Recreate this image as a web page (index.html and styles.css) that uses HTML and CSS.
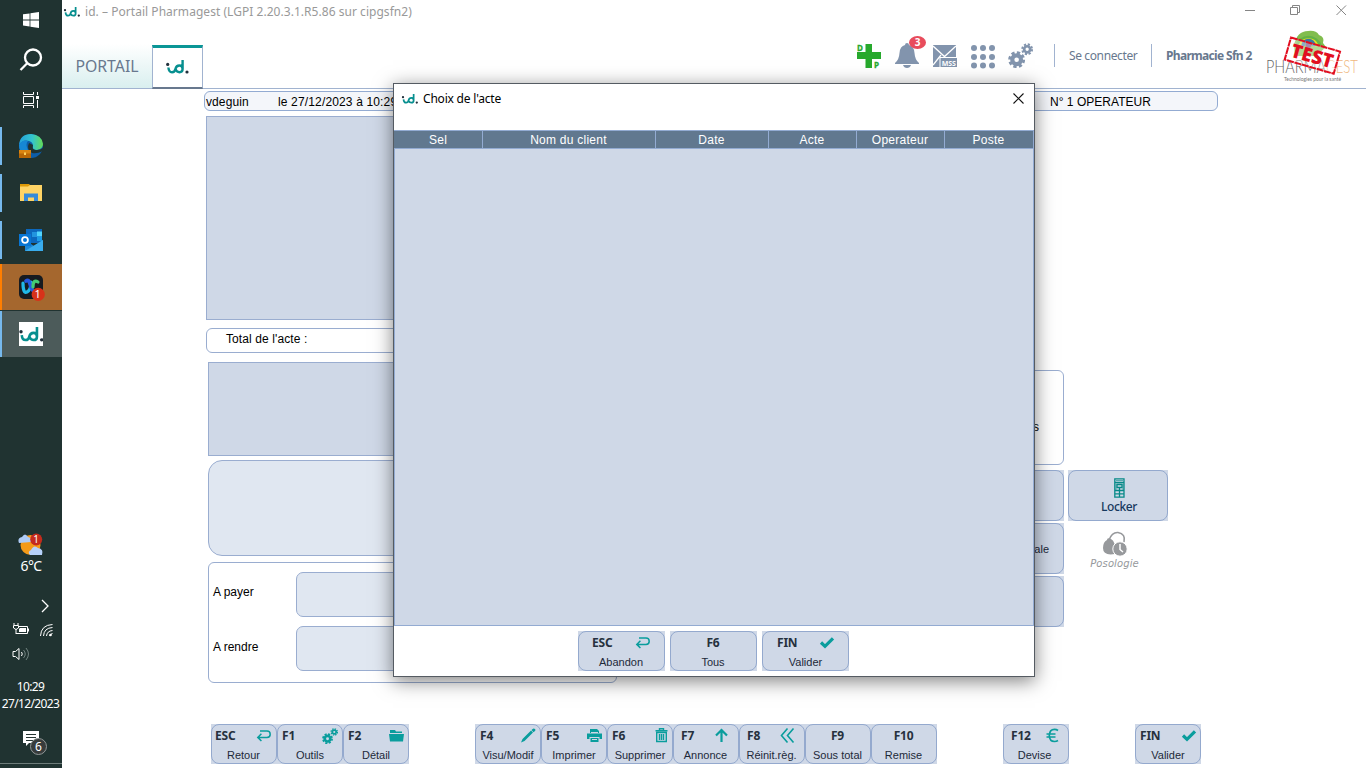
FILE: index.html
```html
<!DOCTYPE html>
<html lang="fr">
<head>
<meta charset="utf-8">
<title>id. – Portail Pharmagest</title>
<link rel="stylesheet" href="styles.css">
</head>
<body>
<svg class="defs" aria-hidden="true">
  <symbol id="logo" viewBox="0 0 23 14">
    <circle cx="1.700" cy="4.400" r="1.600" fill="#22303c"/><circle cx="21" cy="12" r="1.600" fill="#22303c"/>
    <path d="M2.400 7.500Q2.800 12.200 6 12.200Q8.800 12.200 9.400 9Q10.300 5.500 13.300 5.500Q16.600 5.500 16.600 9Q16.600 12.200 13.500 12.200Q10.800 12.200 9.600 9.400M16.600 0V9" fill="none" stroke="#078f8f" stroke-width="2.400"/>
  </symbol>
  <symbol id="back" viewBox="0 0 16 14"><path d="M4 2H11Q14.200 2 14.200 5.200T11 8.400H2M5.400 4.800L1.800 8.400L5.400 12" fill="none" stroke="#0a9d9d" stroke-width="1.500"/></symbol>
  <symbol id="check" viewBox="0 0 16 14"><path d="M2 6.500L6 10.300L14 2.300" fill="none" stroke="#0a9d9d" stroke-width="3.200"/></symbol>
  <symbol id="gears" viewBox="0 0 24 24">
    <g fill="none" stroke="currentColor"><circle cx="8.3" cy="16" r="4.200" stroke-width="4"/><circle cx="8.3" cy="16" r="6.800" stroke-width="2.600" stroke-dasharray="3.140 2.200"/><circle cx="18.400" cy="6" r="2.900" stroke-width="2.600"/><circle cx="18.400" cy="6" r="4.700" stroke-width="2" stroke-dasharray="2.100 1.590"/></g>
  </symbol>
</svg>
<aside class="taskbar">
  <div class="task win"><svg width="16" height="16" viewBox="0 0 16 16"><path d="M0 2.3L6.6 1.4V7.5H0ZM7.4 1.3L16 0V7.5H7.4ZM0 8.4H6.6V14.5L0 13.6ZM7.4 8.4H16V16L7.4 14.7Z" fill="#fff"/></svg></div>
  <div class="task search"><svg width="24" height="24" viewBox="0 0 24 24" fill="none" stroke="#fff" stroke-width="2.300"><circle cx="14" cy="9.5" r="8"/><path d="M8.2 15.3L1.5 22"/></svg></div>
  <div class="task view"><svg width="16" height="16" viewBox="0 0 16 16" fill="none" stroke="#fff"><path d="M.5 0V2.5H10.5V0M.5 16V13.5H10.5V16M.5 4.5H10.5V11.5H.5ZM14.5 0V3M14.5 8V16"/><path d="M13 4H16V7H13Z" fill="#fff" stroke="none"/></svg></div>
  <div class="task app edge"><svg width="24" height="24" viewBox="0 0 24 24"><defs><linearGradient id="eg"><stop stop-color="#249fd8"/><stop offset=".55" stop-color="#34c5cf"/><stop offset="1" stop-color="#65dc53"/></linearGradient></defs><circle cx="12" cy="12" r="12" fill="#0d5da8"/><path d="M0 11Q1 0 12 0Q23 1 24 10Q24 15 18 16Q13 16 14 12Q14 8 10 7Q4 5 0 11Z" fill="url(#eg)"/><path d="M0 11Q3 5 9 7Q6 10 9 16H1Q0 14 0 11Z" fill="#1687d4"/><path d="M10 9Q7 15 13 19Q18 20 24 17L24 14Q20 17 15 15.5Q13 15 14 11Z" fill="#203331"/><path d="M0 16H12V24H0Z" fill="#b96705"/><path d="M0 16H12V19.5H0Z" fill="#db8410"/><path d="M5 18.5H7V21H5Z" fill="#ffd05a"/></svg></div>
  <div class="task app files"><svg width="24" height="20" viewBox="0 0 24 20"><path d="M1 1H10L12 3V10H1Z" fill="#dd9907"/><path d="M1 3.5H9L11 2H23V18H1Z" fill="#fed465"/><path d="M5 18V10.5H19V18H15V14.5H9V18Z" fill="#368bd8"/></svg></div>
  <div class="task app mail"><svg width="24" height="24" viewBox="0 0 24 24"><path d="M7 1H23V15H7Z" fill="#0c68bd"/><path d="M13 4H18V9H13Z" fill="#2295df"/><path d="M18 3.5H23V8.5H18Z" fill="#51d5fc"/><path d="M18 8.5H23V13H18Z" fill="#1d9be6"/><path d="M6 12L15 18L24 12V23H6Z" fill="#1b86d5"/><path d="M6 23L24 12V23Z" fill="#39adee"/><path d="M0 6H12V18H0Z" fill="#0876d4"/><circle cx="6" cy="12" r="2.9" fill="none" stroke="#fff" stroke-width="1.8"/></svg></div>
  <div class="task app webex"><svg width="27" height="27" viewBox="0 0 27 27"><rect x="1" y="1" width="24" height="24" rx="5" fill="#171b20"/><path d="M5 9Q5 20 9 18T13 8" fill="none" stroke="#20b8e6" stroke-width="3.2" stroke-linecap="round"/><path d="M8 7Q11 5 12 10T16 18" fill="none" stroke="#2458df" stroke-width="3.800" stroke-linecap="round"/><path d="M15 13Q15 5 20 8" fill="none" stroke="#45cb72" stroke-width="3.2" stroke-linecap="round"/><circle cx="20.2" cy="20.4" r="6.6" fill="#d83219"/><text class="badge" x="19.7" y="24">1</text></svg></div>
  <div class="task app ident"><span class="white"><svg width="25" height="15"><use href="#logo"/></svg></span></div>
  <div class="weather"><svg width="26" height="24" viewBox="0 0 26 24"><circle cx="12.5" cy="12" r="10" fill="#f59a18"/><path d="M1 10Q-1 5 4 4Q7-1 10 4Q14 5 13 9Z" fill="#aecbf6"/><path d="M12 22Q9 19 13 17Q16 11 20 15Q26 16 24 22Z" fill="#b7d2fa"/><circle cx="18.2" cy="6.5" r="6" fill="#c42b1c"/><text class="badge sm" x="18" y="10">1</text></svg><span>6°C</span></div>
  <div class="tray">
    <svg width="50" height="68" viewBox="0 0 50 68" fill="none" stroke="#fff"><path d="M35 1L41 7L35 13" stroke-width="1.3"/><path d="M11 27.500H20.500V34.500H9M21.500 29.500V32.500M7 24V26M11 24V26M6.5 26.5H11.5V29Q9 32 6.5 29ZM9 30V35"/><path d="M13 29H19V33H12V30Z" fill="#fff" stroke="none"/><path d="M33.5 37Q34 26 45.500 25.500M36.500 37Q37 29 45.500 28.500M39.500 37Q40 32 45.500 31.500M42.500 37Q43 35 45.500 34.500"/><circle cx="43.500" cy="36" r="1.300" fill="#fff" stroke="none"/><path d="M6 52.500H8.500L12 49.500V60.500L8.500 57.500H6Z"/><path d="M14.500 53Q16 55 14.500 57"/><path d="M16.500 51Q20 55 16.500 59M19 49Q24 55 19 61" stroke="#718380"/></svg>
  </div>
  <div class="clock"><span>10:29</span><span>27/12/2023</span></div>
  <div class="notes"><svg width="28" height="28" viewBox="0 0 28 28"><path d="M2 1H18V13H8L5 16V13H2Z" fill="#fff"/><path d="M5 4.500H15M5 7.500H15M5 10.500H12" stroke="#263633"/><circle cx="17.500" cy="16.500" r="8" fill="#383c3c" stroke="#909797"/><text class="count" x="17.500" y="21">6</text></svg></div>
  <div class="edge-line"></div>
</aside>
<main class="window">
  <div class="titlebar"><svg class="tlogo" width="18" height="10"><use href="#logo"/></svg><span class="wintitle">id. – Portail Pharmagest (LGPI 2.20.3.1.R5.86 sur cipgsfn2)</span>
    <svg class="winctl" width="106" height="14" viewBox="0 0 106 14" fill="none" stroke="#858585"><path d="M0 7.500H10M45.500 4.500H52.500V11.500H45.500ZM47.500 4.500V2.500H54.500V9.500H52.500M91.500 2.500L101 12M101 2.500L91.500 12"/></svg></div>
  <header class="header">
    <nav class="tabs"><div class="tab portal"><span>PORTAIL</span></div><div class="tab active"><svg width="23" height="14"><use href="#logo"/></svg></div></nav>
    <div class="tools">
      <svg class="t-dp" width="25" height="25" viewBox="0 0 25 25"><path d="M8.500 0H15V8H24V15H15V24H8.500V15H0V8H8.500Z" fill="#27a92d"/><text class="dp" x="0" y="7">D</text><path d="M16 16H25V25H16Z" fill="#fff"/><text class="dp" x="17" y="24">P</text></svg>
      <svg class="t-bell" width="32" height="33" viewBox="0 0 32 33" fill="#8294ad"><path d="M0 27Q4 24 4.500 17Q5 10 10 9Q10 7 12 7T14 9Q19 10 19.500 17Q20 24 24 27V28H0Z"/><path d="M8 29H16Q15 32 12 32T8 29Z"/><ellipse cx="22.500" cy="6.500" rx="8.500" ry="6.500" fill="#e84c5c"/><text class="badge bell" x="22.500" y="10.200">3</text></svg>
      <svg class="t-mss" width="25" height="23" viewBox="0 0 25 23"><path d="M0 0H23V22H0Z" fill="#8294ad"/><path d="M0 1L11.500 11.500L23 1M0 20L8 10" fill="none" stroke="#fff" stroke-width="1.300"/><rect x="7" y="12.500" width="17.500" height="10" fill="#8294ad" stroke="#fff"/><text class="mss" x="15.800" y="20.500">MSS</text></svg>
      <svg class="t-grid" width="24" height="24" viewBox="0 0 24 24" fill="#8294ad"><circle cx="3" cy="3" r="3"/><circle cx="12" cy="3" r="3"/><circle cx="21" cy="3" r="3"/><circle cx="3" cy="12" r="3"/><circle cx="12" cy="12" r="3"/><circle cx="21" cy="12" r="3"/><circle cx="3" cy="20.500" r="3"/><circle cx="12" cy="20.500" r="3"/><circle cx="21" cy="20.500" r="3"/></svg>
      <svg class="t-gear" width="25" height="25"><use href="#gears"/></svg>
      <span class="login">Se connecter</span><strong class="shop">Pharmacie Sfn 2</strong>
      <svg class="brand" width="95" height="58" viewBox="0 0 95 58"><path d="M28 15Q31 1 42 1Q50 0 53 5Q59 7 57 13L60 17L50 26H29Z" fill="#81bd4e"/><g fill="none" stroke-width="3.500"><path d="M31 16A12 12 0 0 1 54 16" stroke="#63b346"/><path d="M34 16A9 9 0 0 1 51 16" stroke="#e5df20"/><path d="M37 16A5.500 5.500 0 0 1 48 16" stroke="#3879a5"/></g><circle cx="42.500" cy="15" r="3" fill="#743777"/><text class="pharma" x="0" y="43" textLength="60" lengthAdjust="spacingAndGlyphs">PHARMA</text><text class="pharma gest" x="60" y="43" textLength="32" lengthAdjust="spacingAndGlyphs">GEST</text><text class="slogan" x="18" y="51" textLength="57" lengthAdjust="spacingAndGlyphs">Technologies pour la santé</text><g transform="rotate(16 46 25)"><rect x="21" y="14" width="51" height="23" fill="#fff" fill-opacity=".4" stroke="#e20e20" stroke-width="2" stroke-dasharray="7 .7"/><text class="test" x="25" y="32.500" textLength="43" lengthAdjust="spacingAndGlyphs">TEST</text></g></svg>
    </div>
  </header>
  <section class="workspace">
    <div class="status"><span class="s-user">vdeguin</span><span class="s-date">le 27/12/2023 à 10:29</span><span class="s-op">N° 1 OPERATEUR</span></div>
    <div class="columns">
      <div class="left">
        <div class="lines"></div>
        <div class="total"><span>Total de l'acte :</span></div>
        <div class="detail"></div><div class="message"></div>
        <div class="payment"><div class="prow"><span>A payer</span><div class="field"></div></div><div class="prow second"><span>A rendre</span><div class="field"></div></div></div>
      </div>
      <div class="right"><div class="optbox"><span>Options</span></div><div class="btn wide"></div><div class="btn wide"><span class="sale">Fin de vente légale</span></div><div class="btn wide"></div></div>
      <div class="side"><div class="btn wide locker"><svg width="11" height="20" viewBox="0 0 11 20" fill="none" stroke="#078988" stroke-width="1.300"><path d="M.800 .800H10V19.200H.800ZM1 4.500H10M3 6.500H8V9.500H3ZM5.500 9.500V19M1 12.500H10M1 15.800H10"/><path d="M2 2.500H9M2 6V12M9 6V12" stroke-width=".6"/></svg><span>Locker</span></div>
      <div class="poso"><svg width="26" height="26" viewBox="0 0 26 26"><path d="M7 9Q10 1 16 1.500Q24 3 22 11" fill="none" stroke="#97999c" stroke-width="1.600"/><path d="M1 17Q1 11 5 9Q5 6 9 8Q14 10 13 23Q1 25 1 17Z" fill="#97999c"/><circle cx="18" cy="18" r="7.200" fill="#97999c" stroke="#fff"/><path d="M18 13V18.500L21 21" fill="none" stroke="#fff" stroke-width="1.500"/></svg><em>Posologie</em></div></div>
    </div>
    <footer class="keys">
      <div class="btn key"><b>ESC</b><svg class="ic" width="16" height="14"><use href="#back"/></svg><span>Retour</span></div>
      <div class="btn key k1"><b>F1</b><svg class="ic" width="16" height="16"><use href="#gears"/></svg><span>Outils</span></div>
      <div class="btn key k1"><b>F2</b><svg class="ic" width="15" height="14" viewBox="0 0 15 14"><path d="M1 1H6L7 2.500H13V4H1ZM0 5H15L14 12.500H1Z" fill="#0a9d9d"/></svg><span>Détail</span></div>
      <div class="btn key c5 k1"><b>F4</b><svg class="ic" width="15" height="15" viewBox="0 0 15 15"><path d="M0 14.500L1.500 11L10 2.500L12 4.500L3.500 13ZM10.500 2L12 .7Q13 0 14 1T14 3L12.500 4.200Z" fill="#0a9d9d"/></svg><span>Visu/Modif</span></div>
      <div class="btn key k1"><b>F5</b><svg class="ic" width="15" height="15" viewBox="0 0 15 15"><path d="M3 1H10L12 3V5H3ZM0 5.500H15V11H12.500V9H2.500V11H0ZM3.500 10H11.500V14H3.500Z" fill="#0a9d9d"/><path d="M4 4.500H11M5 11.500H10" stroke="#cfd8e7"/></svg><span>Imprimer</span></div>
      <div class="btn key k1"><b>F6</b><svg class="ic bin" width="13" height="15" viewBox="0 0 13 15"><path d="M4.500 2V.7H8.500V2M.5 2.700H12.500M1.700 4.500H11.300V13.500H1.700ZM4.500 6V12M6.500 6V12M8.500 6V12" fill="none" stroke="#0a9d9d" stroke-width="1.400"/></svg><span>Supprimer</span></div>
      <div class="btn key k2"><b>F7</b><svg class="ic" width="15" height="15" viewBox="0 0 15 15"><path d="M7.500 14V2M2 7.500L7.500 2L13 7.500" fill="none" stroke="#0a9d9d" stroke-width="2.200"/></svg><span>Annonce</span></div>
      <div class="btn key k2"><b>F8</b><svg class="ic" width="15" height="15" viewBox="0 0 15 15"><path d="M7.500 .5L1.500 7.500L7.500 14.500M13.500 .5L7.500 7.500L13.500 14.500" fill="none" stroke="#0a9d9d" stroke-width="1.600"/></svg><span>Réinit.règ.</span></div>
      <div class="btn key mid"><b>F9</b><span>Sous total</span></div>
      <div class="btn key mid"><b>F10</b><span>Remise</span></div>
      <div class="btn key c13"><b>F12</b><svg class="ic euro" width="13" height="15" viewBox="0 0 13 15"><path d="M12 2.500Q10.500 1.300 8.500 1.300Q3.500 1.300 3.300 7.500Q3.500 13.500 8.500 13.500Q10.500 13.500 12 12.500M.5 6H9.500M.5 9H9.500" fill="none" stroke="#0a9d9d" stroke-width="1.700"/></svg><span>Devise</span></div>
      <div class="btn key c15"><b>FIN</b><svg class="ic" width="16" height="14"><use href="#check"/></svg><span>Valider</span></div>
    </footer>
  </section>
</main>
<div class="dialog" role="dialog">
  <div class="dtitle"><svg width="18" height="10"><use href="#logo"/></svg><span>Choix de l'acte</span><svg class="close" width="11" height="11" viewBox="0 0 11 11"><path d="M.5 .5L10.500 10.500M10.500 .5L.5 10.500" stroke="#111" stroke-width="1.100"/></svg></div>
  <div class="thead"><span>Sel</span><span>Nom du client</span><span>Date</span><span>Acte</span><span>Operateur</span><span>Poste</span></div>
  <div class="tbody"></div>
  <div class="actions">
    <div class="btn key act"><b>ESC</b><svg class="ic" width="16" height="14"><use href="#back"/></svg><span>Abandon</span></div>
    <div class="btn key act mid"><b>F6</b><span>Tous</span></div>
    <div class="btn key act fin"><b>FIN</b><svg class="ic" width="16" height="14"><use href="#check"/></svg><span>Valider</span></div>
  </div>
</div>
</body>
</html>
```
FILE: styles.css
```css
* { box-sizing: border-box; }
body { margin: 0; width: 1366px; height: 768px; overflow: hidden; display: flex; background: #fff; font: 12px "Liberation Sans", Arial, sans-serif; color: #000; position: relative; }
svg { display: block; flex: none; }
span, b, strong, em { white-space: nowrap; }
.defs { position: absolute; width: 0; height: 0; }

/* taskbar */
.taskbar { width: 62px; height: 768px; flex: none; background: #203331; color: #fff; display: flex; flex-direction: column; }
.task { height: 47px; display: flex; align-items: center; justify-content: center; flex: none; }
.win, .search, .view { height: 40px; }
.app { height: 46px; margin-bottom: 1px; border-left: 2px solid #76b9ed; padding-right: 2px; }
.edge, .files, .mail { height: 38px; margin-bottom: 9px; }
.edge { margin-top: 7px; }
.mail { margin-bottom: 5px; }
.webex { background: #a5672e; border-color: #ff7e00; padding-right: 1px; }
.ident { background: #4c5b5a; }
.white { width: 24px; height: 24px; background: #fff; display: flex; align-items: center; overflow: hidden; }
.badge { font: 11px "Noto Sans", sans-serif; fill: #fff; text-anchor: middle; }
.badge.sm { font-size: 10px; }
.badge.bell { font-weight: 700; font-size: 10px; }
.weather { margin-top: 175px; height: 46px; display: flex; flex-direction: column; align-items: center; font: 14px "Noto Sans", sans-serif; }
.weather span { line-height: 18px; letter-spacing: -.6px; }
.tray { margin-top: 20px; padding-left: 7px; height: 70px; }
.clock { margin-top: 9px; height: 36px; display: flex; flex-direction: column; align-items: center; font: 12px/17px "Noto Sans", sans-serif; letter-spacing: -.65px; padding-right: 1px; }
.notes { margin: 16px 0 0 21px; height: 31px; }
.count { font: 12px "Noto Sans", sans-serif; fill: #fff; text-anchor: middle; }
.edge-line { border-top: 1px solid #6d7c7a; margin-top: auto; height: 5px; }

/* window frame and header */
.window { flex: 1; display: flex; flex-direction: column; }
.titlebar { height: 24px; display: flex; align-items: center; padding: 0 20px 1px 1px; }
.wintitle { font: 12px "Noto Sans", sans-serif; color: #999; margin-left: 4px; letter-spacing: .04px; }
.winctl { margin-left: auto; margin-top: -3px; margin-right: -5px; }
.header { height: 65px; border-bottom: 1px solid #a1b3d0; display: flex; justify-content: space-between; }
.tabs { display: flex; align-items: flex-end; height: 65px; }
.tab { display: flex; align-items: center; justify-content: center; }
.portal { width: 90px; height: 44px; margin-bottom: 1px; background: linear-gradient(#fff, #d9efef); }
.portal span { font: 17px "Noto Sans", sans-serif; color: #68788e; transform: scaleX(.93); margin-top: -2px; }
.active { width: 51px; height: 44px; border: 1px solid #a1b3d0; border-top: 3px solid #0a9696; border-bottom: 2px solid #68788e; background: #fff; }
.active svg { margin-top: -2px; }
.tools { display: flex; align-items: flex-start; }
.t-dp { margin: 20px 13px 0 0; overflow: visible; }
.t-bell { margin: 12px 6px 0 0; }
.t-mss { margin: 21px 13px 0 0; }
.t-grid { margin: 21px 13px 0 0; }
.t-gear { margin: 19px 21px 0 0; color: #8294ad; }
.dp { font: 700 8px "Open Sans", sans-serif; fill: #27a92d; stroke: #27a92d; stroke-width: .3px; }
.mss { font: 700 7px "Noto Sans", sans-serif; fill: #fff; text-anchor: middle; }
.login, .shop { font: 12px/23px "Noto Sans", sans-serif; color: #68788e; border-left: 1px solid #a1b3d0; margin-top: 20px; padding-left: 14px; }
.login { width: 97px; letter-spacing: -.38px; }
.shop { font-weight: 700; width: 115px; letter-spacing: -.68px; }
.brand { margin: 6px 5px 0 0; overflow: visible; }
.pharma { font: 17px Lato, sans-serif; font-weight: 300; fill: #666; }
.pharma.gest { fill: #efb77d; }
.slogan { font: 5px Lato, sans-serif; fill: #777; }
.test { font: 900 19px "Noto Sans", sans-serif; fill: #e20e20; }

/* sales screen behind the dialog */
.workspace { flex: 1; padding: 2px 0 0 142px; }
.status { width: 1014px; height: 20px; border: 1px solid #93abd2; border-radius: 6px; background: #f4f6fa; display: flex; align-items: center; padding: 1px 0 0 1px; }
.s-user { width: 72px; letter-spacing: .1px; }
.s-date { width: 772px; letter-spacing: .15px; }
.s-op { letter-spacing: .02px; }
.columns { display: grid; grid-template-columns: 654px 200px 100px; column-gap: 4px; margin: 5px 0 0 2px; height: 608px; }
.left { display: flex; flex-direction: column; }
.lines { height: 204px; border: 1px solid #9aadd0; background: #cfd8e7; }
.total { height: 25px; margin-top: 8px; border: 1px solid #9aadd0; border-radius: 6px; padding: 3px 19px; letter-spacing: .1px; }
.detail { height: 94px; margin: 9px 0 0 2px; border: 1px solid #9aadd0; background: #cfd8e7; }
.message { height: 96px; margin: 4px 0 0 2px; border: 1px solid #9aadd0; border-radius: 14px; background: #e0e7f1; }
.payment { width: 409px; height: 121px; margin: 6px 0 0 2px; border: 1px solid #9aadd0; border-radius: 6px; padding: 9px 4px; display: flex; flex-direction: column; gap: 9px; }
.prow { display: flex; align-items: flex-start; }
.prow span { width: 83px; padding-top: 13px; }
.prow.second span { padding-top: 14px; }
.field { flex: 1; height: 45px; border: 1px solid #9aadd0; border-radius: 7px; background: #e0e7f1; }
/* keys: a rounded outline inside a square plate */
.btn { position: relative; background: #cfd8e7; border: 1px solid transparent; color: #1d2939; }
.btn::before { content: ""; position: absolute; inset: -1px; border: 1px solid #94a9ce; border-radius: 8px; }
.right { padding-top: 254px; display: flex; flex-direction: column; }
.optbox { height: 95px; border: 1px solid #9aadd0; border-radius: 6px; margin-bottom: 5px; display: flex; align-items: center; justify-content: flex-end; padding: 18px 24px 0 0; }
.wide { height: 51px; margin-bottom: 2px; flex: none; }
.right .wide { display: flex; align-items: center; justify-content: flex-end; padding-right: 14px; font-size: 11px; }
.side { padding-top: 354px; }
.locker { display: flex; flex-direction: column; align-items: center; padding: 7px 0 0 2px; font: 500 12px/17px "Noto Sans", sans-serif; color: #16385e; }
.locker span { letter-spacing: -.35px; }
.poso { display: flex; flex-direction: column; align-items: center; width: 93px; padding-top: 8px; color: #96999c; }
.poso em { font: italic 10px/13px "DejaVu Sans", sans-serif; letter-spacing: .1px; }
.keys { display: grid; grid-template-columns: repeat(15, 66px); margin-left: 7px; }
.c5 { grid-column: 5; }
.c13 { grid-column: 13; }
.c15 { grid-column: 15; }
.key { height: 40px; display: grid; grid-template-columns: 1fr auto; grid-template-rows: 21px 17px; align-items: center; padding: 0 3px; }
.key b { font: 700 12px "Noto Sans", sans-serif; letter-spacing: -.2px; color: #26313e; }
.key span { grid-column: 1 / 3; justify-self: center; font-size: 11px; margin-top: 1px; margin-right: 1px; }
.key .ic { margin: 0 -1px 0 1px; transform: translateX(-1px); }
.key .ic { margin: 0; color: #0a9d9d; }
.key .bin { margin-right: 1px; transform: none; }
.key.k1 { padding-left: 4px; }
.key.k2 { padding: 0 8px 0 7px; }
.key.k2 span { margin: 1px 0 0; }
.key.mid b { grid-column: 1 / 3; justify-self: center; margin-right: 1px; }
.key.c13 { padding: 0 9px 0 7px; }
.key.c13 .ic { transform: none; }
.key.c15 { padding-left: 4px; }
.key.c15 .ic, .key.act .ic { transform: none; }

/* dialog */
.dialog { position: absolute; left: 393px; top: 83px; width: 642px; height: 594px; border: 1px solid #555b62; background: #fff; box-shadow: 0 4px 18px rgba(0,0,0,.5); display: flex; flex-direction: column; }
.dtitle { height: 46px; display: flex; align-items: flex-start; padding: 10px 10px 0 7px; }
.dtitle span { font: 12px/15px "Noto Sans", sans-serif; margin: -3px 0 0 4px; letter-spacing: -.2px; }
.dtitle .close { margin: -1px 0 0 auto; }
.thead { height: 19px; display: grid; grid-template-columns: 88px 173px 113px 88px 88px 89px; padding-left: 1px; background: #61788f; border: 1px solid #93abd2; border-width: 1px 0; color: #fff; }
.thead span { text-align: center; border-right: 1px solid #93abd2; line-height: 18px; letter-spacing: .25px; padding-right: 1px; }
.tbody { height: 477px; background: #cfd8e7; border: 1px solid #93abd2; border-top: 0; }
.actions { display: flex; gap: 5px; margin: 5px 0 0 184px; }
.key.act { width: 87px; padding: 0 13px; }
.key.act.fin { padding-left: 14px; }
```
